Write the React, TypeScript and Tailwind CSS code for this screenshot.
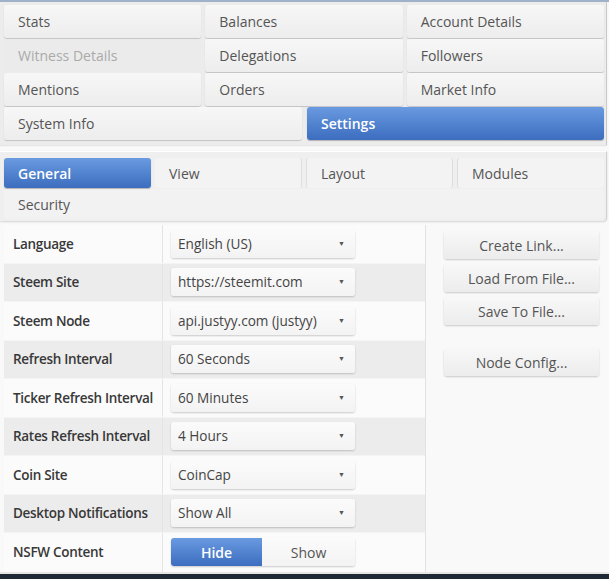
import React from "react";

const btn =
  "flex items-center rounded-[3px] bg-gradient-to-b from-[#f7f7f7] to-[#ededed] shadow-[0_1px_1px_rgba(0,0,0,0.18)] text-[14px] text-[#555] pl-[14px]";
const active =
  "flex items-center rounded-[3px] bg-gradient-to-b from-[#6a9ae0] to-[#3c6dbf] shadow-[0_1px_1px_rgba(0,0,0,0.25)] text-[14px] text-white font-semibold pl-[14px]";

function Select({ value }: { value: string }) {
  return (
    <div className="w-[184px] h-[28px] rounded-[3px] bg-gradient-to-b from-[#fbfbfb] to-[#f3f3f3] shadow-[0_1px_2px_rgba(0,0,0,0.2)] flex items-center justify-between pl-[7px] pr-[10px] text-[13.6px] text-[#444]">
      <span>{value}</span>
      <span className="text-[7px] text-[#555]">▼</span>
    </div>
  );
}

const rows: [string, string][] = [
  ["Language", "English (US)"],
  ["Steem Site", "https://steemit.com"],
  ["Steem Node", "api.justyy.com (justyy)"],
  ["Refresh Interval", "60 Seconds"],
  ["Ticker Refresh Interval", "60 Minutes"],
  ["Rates Refresh Interval", "4 Hours"],
  ["Coin Site", "CoinCap"],
  ["Desktop Notifications", "Show All"],
  ["NSFW Content", ""],
];

export default function App() {
  return (
    <div className="w-[609px] h-[579px] bg-[#f9f9f9] font-['Open_Sans',sans-serif] flex flex-col overflow-hidden">
      <div className="h-[2px] bg-[#9fb2c9]" />
      {/* main nav */}
      <div className="w-[607px] bg-[#ececec] border-r border-[#c9c9c9] pl-[4px] pr-[2px] pt-[3px] pb-[5px] shadow-[0_1px_1px_rgba(0,0,0,0.08)]">
        <div className="grid grid-cols-6 gap-x-[4px] gap-y-[1px]">
          <div className={btn + " col-span-2 h-[33px]"}>Stats</div>
          <div className={btn + " col-span-2 h-[33px]"}>Balances</div>
          <div className={btn + " col-span-2 h-[33px]"}>Account Details</div>
          <div className={"col-span-2 h-[33px] flex items-center rounded-[3px] bg-[#ebebeb] text-[14px] text-[#aaa] pl-[14px]"}>Witness Details</div>
          <div className={btn + " col-span-2 h-[33px]"}>Delegations</div>
          <div className={btn + " col-span-2 h-[33px]"}>Followers</div>
          <div className={btn + " col-span-2 h-[33px]"}>Mentions</div>
          <div className={btn + " col-span-2 h-[33px]"}>Orders</div>
          <div className={btn + " col-span-2 h-[33px]"}>Market Info</div>
          <div className={btn + " col-span-3 h-[33px]"}>System Info</div>
          <div className={active + " col-span-3 h-[33px] ml-[1px]"}>Settings</div>
        </div>
      </div>
      <div className="h-[6px]" />
      {/* sub nav */}
      <div className="w-[607px] bg-[#efefef] border-r border-t border-[#d0d0d0] border-t-white rounded-br-[4px] pl-[4px] pr-[2px] pt-[6px] pb-[2px] shadow-[0_1px_2px_rgba(0,0,0,0.15)]">
        <div className="grid grid-cols-4 gap-x-[4px]">
          <div className={active + " h-[30px]"}>General</div>
          <div className={btn + " h-[30px] shadow-none bg-none bg-[#f3f3f3] border-r border-[#ddd]"}>View</div>
          <div className={btn + " h-[30px] shadow-none bg-none bg-[#f3f3f3] border-r border-l border-[#ddd]"}>Layout</div>
          <div className={btn + " h-[30px] shadow-none bg-none bg-[#f3f3f3] border-l border-[#ddd]"}>Modules</div>
        </div>
        <div className="h-[30px] mt-[1px] flex items-center pl-[14px] text-[14px] text-[#555] bg-[#f2f2f2] rounded-[3px]">Security</div>
      </div>
      {/* content */}
      <div className="flex pl-[4px] mt-[4px]">
        <div className="w-[422px] border-r border-[#e2e2e2] bg-[#fcfcfc]">
          {rows.map(([label, value], i) => (
            <div
              key={label}
              className={
                "flex h-[38.5px] items-center " +
                (i % 2 === 1 ? "bg-[#ececec]" : "bg-[#fbfbfb]") +
                (i < rows.length - 1 ? " border-b border-[#f4f4f4]" : "")
              }
            >
              <div className="w-[159px] h-full flex items-center pl-[9px] text-[13.5px] font-semibold tracking-[-0.3px] text-[#383838] whitespace-nowrap border-r border-[#e4e4e4]">
                {label}
              </div>
              <div className="pl-[8px]">
                {value ? (
                  <Select value={value} />
                ) : (
                  <div className="flex w-[184px] h-[28px] rounded-[3px] shadow-[0_1px_2px_rgba(0,0,0,0.2)] text-[14px]">
                    <div className="w-[91px] flex items-center justify-center rounded-l-[3px] bg-gradient-to-b from-[#6a9ae0] to-[#3c6dbf] text-white font-semibold">Hide</div>
                    <div className="flex-1 flex items-center justify-center rounded-r-[3px] bg-gradient-to-b from-[#fbfbfb] to-[#f3f3f3] text-[#555]">Show</div>
                  </div>
                )}
              </div>
            </div>
          ))}
        </div>
        <div className="flex-1 pl-[18px] pt-[6px] flex flex-col gap-[5px]">
          {["Create Link...", "Load From File...", "Save To File..."].map((t) => (
            <div key={t} className="w-[155px] h-[28px] flex items-center justify-center rounded-[3px] bg-gradient-to-b from-[#f8f8f8] to-[#ececec] shadow-[0_1px_2px_rgba(0,0,0,0.2)] text-[14px] text-[#555]">
              {t}
            </div>
          ))}
          <div className="mt-[18px] w-[155px] h-[28px] flex items-center justify-center rounded-[3px] bg-gradient-to-b from-[#f8f8f8] to-[#ececec] shadow-[0_1px_2px_rgba(0,0,0,0.2)] text-[14px] text-[#555]">
            Node Config...
          </div>
        </div>
      </div>
      <div className="flex-1" />
      <div className="h-[2px] bg-[#e6e6e6]" />
      <div className="h-[5px] bg-[#1e2935]" />
    </div>
  );
}
